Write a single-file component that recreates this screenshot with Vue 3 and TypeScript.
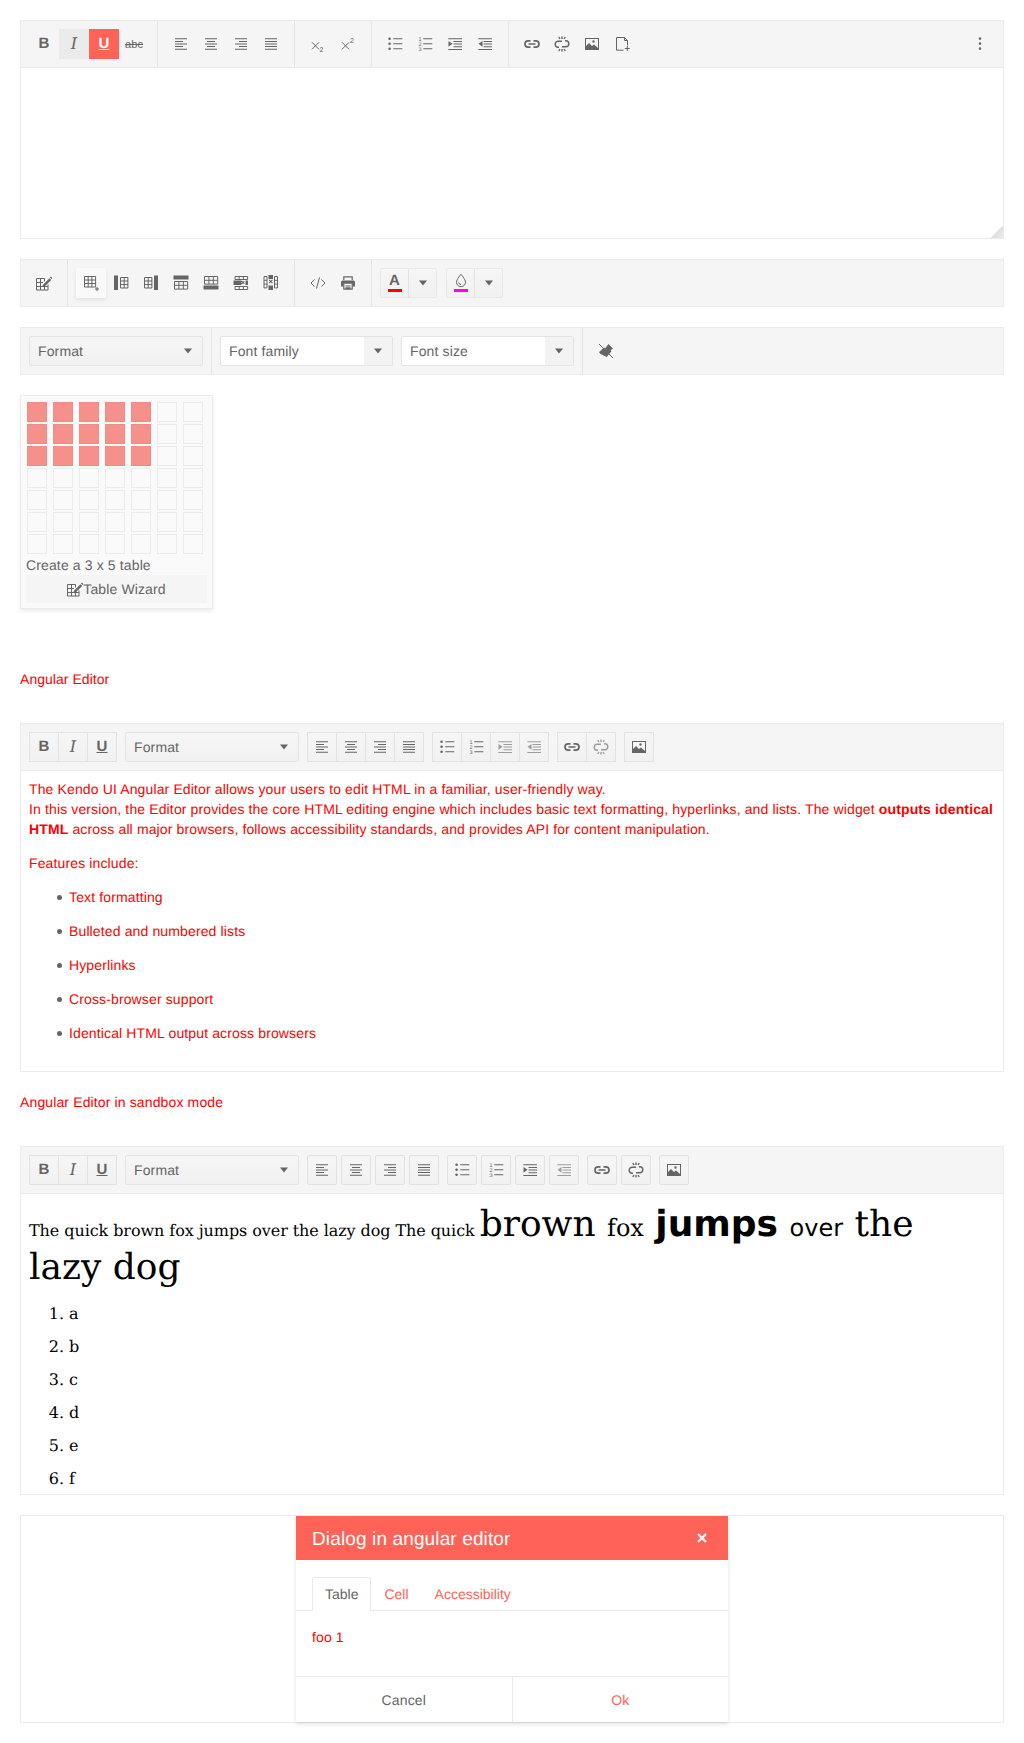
<script setup lang="ts">
import { h } from 'vue'

type Shape = { fill?: string; stroke?: string; width?: number; labels?: [number, number, string, number][] }
type Tool = { icon: string; state?: string }

// 1px bars are written as [x, y, w, h]
const bars = (spec: number[][]) =>
  spec.map(([x, y, w, ht = 1]) => `M${x} ${y}h${w}v${ht}h${-w}z`).join('')
const rows = [2.3, 4.9, 7.5, 10.1, 12.7]
const dot = (x: number, y: number, r = 1.3) =>
  `M${x - r} ${y}a${r} ${r} 0 1 0 ${2 * r} 0a${r} ${r} 0 1 0 ${-2 * r} 0z`
const grid = (x: number, y: number, cols: number, lines: number, w: number, ht: number) => {
  let d = ''
  for (let i = 0; i <= cols; i++) d += `M${x + i * w} ${y}v${lines * ht}`
  for (let i = 0; i <= lines; i++) d += `M${x} ${y + i * ht}h${cols * w}`
  return d
}

const icons: Record<string, Shape> = {
  alignLeft: { fill: bars(rows.map((y, i) => [2, y, i % 2 ? 8 : 12])) },
  alignCenter: { fill: bars(rows.map((y, i) => (i % 2 ? [4, y, 8] : [2, y, 12]))) },
  alignRight: { fill: bars(rows.map((y, i) => (i % 2 ? [6, y, 8] : [2, y, 12]))) },
  alignJustify: { fill: bars(rows.map((y) => [2, y, 12])) },
  sub: { stroke: 'M2 6.3l7 7M9 6.3l-7 7', labels: [[9.4, 15.5, '2', 7]] },
  sup: { stroke: 'M2 6.3l7 7M9 6.3l-7 7', labels: [[10, 6.7, '2', 7]] },
  bullets: {
    fill: dot(2.6, 2.8) + dot(2.6, 7.8) + dot(2.6, 12.8) + bars([[6.3, 2.3, 9], [6.3, 7.3, 9], [6.3, 12.3, 9]])
  },
  numbers: {
    fill: bars([[6.3, 2.3, 9], [6.3, 7.3, 9], [6.3, 12.3, 9]]),
    labels: [[1.6, 4.8, '1', 5.5], [1.6, 10, '2', 5.5], [1.6, 15, '3', 5.5]]
  },
  indent: {
    fill:
      bars([[1.3, 2.3, 13.7], [1.3, 13, 13.7], [6.5, 5, 8.5], [6.5, 7.6, 8.5], [6.5, 10.3, 8.5]]) +
      'M1.5 4.9l4 2.9-4 2.9z'
  },
  outdent: {
    fill:
      bars([[1.3, 2.3, 13.7], [1.3, 13, 13.7], [6.5, 5, 8.5], [6.5, 7.6, 8.5], [6.5, 10.3, 8.5]]) +
      'M5.5 4.9l-4 2.9 4 2.9z'
  },
  link: { stroke: 'M6.5 4.8H4.2a3.2 3.2 0 0 0 0 6.4h2.3M9.5 4.8h2.3a3.2 3.2 0 0 1 0 6.4H9.5M4.5 8h7', width: 1.7 },
  unlink: {
    stroke: 'M8 5.2H4.2a3 3 0 0 0 0 6h.8M8 10.8h3.8a3 3 0 0 0 0-6H11M8 .5v2.4M4.8 1l1.1 2M11.2 1l-1.1 2M8 13v2.4M4.8 15l1.1-2M11.2 15l-1.1-2',
    width: 1.4
  },
  image: {
    fill: 'M1 2h14v12H1zM2 3v7l3-3 3 3 2-1.5 4 3.5V3z' + dot(9.5, 5.5, 1.2)
  },
  insertFile: { stroke: 'M2.5 1.5h8v3h3v5M10.5 1.5l3 3M2.5 1.5v12.7h7M10.8 12.5h5M13.3 10v5' },
  more: { fill: dot(8, 2.6) + dot(8, 7.6) + dot(8, 12.6) },
  wizard: {
    stroke: 'M.5 3.5h8M.5 7.5h6.5M.5 11.5h11.5M.5 15h11.5M.5 3.5V15M4.5 3.5V15M8.5 3.5v3M8.5 11.5V15M12 9.5V15',
    fill: 'M7 9.8l6.5-6.6 1.7 1.7-6.6 6.6-2.4.6zM14 2.6l1-1 1.4 1.4-1 1z'
  },
  tableAdd: { stroke: grid(1.5, 1.5, 3, 3, 3.7, 3.5) + 'M12 14h4M14 12v4' },
  colLeft: { stroke: grid(7.5, 2.5, 2, 3, 3.7, 3.5), fill: bars([[1, 0.5, 4, 14.5]]) },
  colRight: { stroke: grid(1.5, 2.5, 2, 3, 3.7, 3.5), fill: bars([[11, 0.5, 4, 14.5]]) },
  rowAbove: { stroke: grid(1.5, 6.5, 3, 2, 4.4, 3.8), fill: bars([[.5, 0.5, 15, 4]]) },
  rowBelow: { stroke: grid(1.5, 1.5, 3, 2, 4.4, 3.8), fill: bars([[.5, 10.5, 15, 4]]) },
  rowDelete: {
    stroke: grid(2, 1.5, 3, 1, 4.2, 3) + grid(2, 11.5, 3, 1, 4.2, 3),
    fill: bars([[.5, 5.5, 8, 4.5], [12.5, 5.5, 2.5, 4.5]]) + 'M11 5.8l.7.7-1 1 1 1-.7.7-1-1-1 1-.7-.7 1-1-1-1 .7-.7 1 1z'
  },
  colDelete: {
    stroke: grid(1, 1.5, 1, 3, 3, 3.8) + grid(11.5, 1.5, 1, 3, 3, 3.8),
    fill: bars([[5.5, 0, 4.5, 4], [5.5, 10.5, 4.5, 4.5]]) + 'M5.8 5.3l.7-.7 1.3 1.2 1.3-1.2.7.7-1.2 1.2 1.2 1.2-.7.7-1.3-1.2-1.3 1.2-.7-.7 1.2-1.2z'
  },
  source: { stroke: 'M4.5 4.5L1 8l3.5 3.5M11.5 4.5L15 8l-3.5 3.5M9.5 2.5l-3 11' },
  print: {
    fill: 'M2.5 5.5h11a1.5 1.5 0 0 1 1.5 1.5v4.5h-2.5V8.8h-9v2.7H1V7a1.5 1.5 0 0 1 1.5-1.5z',
    stroke: 'M3.8 5V1.8h8.4V5M3.8 9v5.2h8.4V9M5.5 11h5M5.5 12.8h5',
    width: 1.2
  },
  clean: {
    fill: 'M10.5 1l4.5 4.5-2.5 1.8 1 1-4.7 5.7L2.5 11 1 9.2l5-4.7 1 1z',
    stroke: 'M1 1l14 14'
  },
  drop: {
    stroke: 'M8 1.3S3.5 6.3 3.5 9.2a4.5 4.5 0 0 0 9 0C12.5 6.3 8 1.3 8 1.3zM5.8 9.5a2.2 2.2 0 0 0 2.2 2.1'
  },
  arrow: { fill: 'M4 5.5h8L8 10.5z' },
  close: { stroke: 'M4 4l8 8M12 4l-8 8', width: 2.2 }
}

const glyphs: Record<string, string> = {
  bold: 'B',
  italic: 'I',
  underline: 'U',
  strike: 'abc'
}

// functional component so every toolbar can share the drawing code
const Ic = (props: { name: string }) => {
  const name = props.name
  if (glyphs[name]) return h('span', { class: `glyph glyph--${name}` }, glyphs[name])
  const s = icons[name]
  const kids = []
  if (s.fill) kids.push(h('path', { d: s.fill, fill: 'currentColor', 'fill-rule': 'evenodd' }))
  if (s.stroke)
    kids.push(h('path', { d: s.stroke, fill: 'none', stroke: 'currentColor', 'stroke-width': s.width ?? 1 }))
  for (const [x, y, label, size] of s.labels ?? [])
    kids.push(h('text', { x, y, fill: 'currentColor', 'font-size': size, 'font-family': 'Liberation Sans' }, label))
  return h('svg', { class: 'ic', width: 16, height: 16, viewBox: '0 0 16 16' }, kids)
}
Ic.props = ['name']

const t = (...names: string[]): Tool[] => names.map((icon) => ({ icon }))
const align = ['alignLeft', 'alignCenter', 'alignRight', 'alignJustify']

const fullToolbar: Tool[][] = [
  [{ icon: 'bold' }, { icon: 'italic', state: 'hover' }, { icon: 'underline', state: 'on' }, { icon: 'strike' }],
  t(...align),
  t('sub', 'sup'),
  t('bullets', 'numbers', 'indent', 'outdent'),
  t('link', 'unlink', 'image', 'insertFile')
]
const tableToolbar: Tool[][] = [
  t('wizard'),
  [
    { icon: 'tableAdd', state: 'focus' },
    ...t('colLeft', 'colRight', 'rowAbove', 'rowBelow', 'rowDelete', 'colDelete')
  ],
  t('source', 'print')
]

const angularGroups: Tool[][] = [
  t(...align),
  [...t('bullets', 'numbers'), { icon: 'indent', state: 'off' }, { icon: 'outdent', state: 'off' }],
  [{ icon: 'link' }, { icon: 'unlink', state: 'off' }],
  t('image')
]
const sandboxGroups: Tool[][] = [
  t(...align),
  [...t('bullets', 'numbers', 'indent'), { icon: 'outdent', state: 'off' }],
  t('link', 'unlink'),
  t('image')
]

const features = [
  'Text formatting',
  'Bulleted and numbered lists',
  'Hyperlinks',
  'Cross-browser support',
  'Identical HTML output across browsers'
]
const letters = ['a', 'b', 'c', 'd', 'e', 'f']
const cells = Array.from({ length: 49 }, (_, i) => i % 7 < 5 && i < 21)
const tabs = ['Table', 'Cell', 'Accessibility']
</script>

<template>
  <div class="page">
    <section class="editor editor--first">
      <div class="toolbar">
        <div
          v-for="(group, g) in fullToolbar"
          :key="g"
          class="tool-group"
          :class="{ 'tool-group--plain': g === fullToolbar.length - 1 }"
        >
          <button v-for="tool in group" :key="tool.icon" class="tool" :class="tool.state">
            <Ic :name="tool.icon" />
          </button>
        </div>
        <button class="tool tool--more"><Ic name="more" /></button>
      </div>
      <div class="resize-handle"></div>
    </section>

    <div class="toolbar toolbar--solo">
      <div v-for="(group, g) in tableToolbar" :key="g" class="tool-group">
        <button v-for="tool in group" :key="tool.icon" class="tool" :class="tool.state">
          <Ic :name="tool.icon" />
        </button>
      </div>
      <div class="tool-group tool-group--plain tool-group--splits">
        <div class="split">
          <button class="split__main">
            <span class="swatch-icon"><b class="swatch-a">A</b><i class="bar bar--red"></i></span>
          </button>
          <button class="split__arrow"><Ic name="arrow" /></button>
        </div>
        <div class="split">
          <button class="split__main">
            <span class="swatch-icon"><Ic name="drop" /><i class="bar bar--pink"></i></span>
          </button>
          <button class="split__arrow"><Ic name="arrow" /></button>
        </div>
      </div>
    </div>

    <div class="toolbar toolbar--solo">
      <div class="tool-group">
        <div class="dropdown">Format <Ic name="arrow" /></div>
      </div>
      <div class="tool-group">
        <div class="combo"><span class="combo__text">Font family</span><span class="combo__arrow"><Ic name="arrow" /></span></div>
        <div class="combo"><span class="combo__text">Font size</span><span class="combo__arrow"><Ic name="arrow" /></span></div>
      </div>
      <div class="tool-group tool-group--plain">
        <button class="tool"><Ic name="clean" /></button>
      </div>
    </div>

    <div class="table-popup">
      <div class="table-popup__grid">
        <span v-for="(on, i) in cells" :key="i" class="cell" :class="{ 'cell--on': on }"></span>
      </div>
      <div class="table-popup__caption">Create a 3 x 5 table</div>
      <button class="table-popup__wizard"><Ic name="wizard" />Table Wizard</button>
    </div>

    <p class="section-title">Angular Editor</p>
    <section class="editor editor--tall">
      <div class="toolbar toolbar--boxed">
        <div class="btn-group">
          <button v-for="name in ['bold', 'italic', 'underline']" :key="name" class="box-btn"><Ic :name="name" /></button>
        </div>
        <div class="dropdown">Format <Ic name="arrow" /></div>
        <div v-for="(group, g) in angularGroups" :key="g" class="btn-group">
          <button v-for="tool in group" :key="tool.icon" class="box-btn" :class="tool.state"><Ic :name="tool.icon" /></button>
        </div>
      </div>
      <div class="content">
        <p>
          The Kendo UI Angular Editor allows your users to edit HTML in a familiar, user-friendly way.<br />
          In this version, the Editor provides the core HTML editing engine which includes basic text formatting,
          hyperlinks, and lists. The widget <strong>outputs identical HTML</strong> across all major browsers, follows
          accessibility standards, and provides API for content manipulation.
        </p>
        <p>Features include:</p>
        <ul>
          <li v-for="item in features" :key="item"><p>{{ item }}</p></li>
        </ul>
      </div>
    </section>

    <p class="section-title section-title--second">Angular Editor in sandbox mode</p>
    <section class="editor editor--tall">
      <div class="toolbar toolbar--boxed">
        <div class="btn-group">
          <button v-for="name in ['bold', 'italic', 'underline']" :key="name" class="box-btn"><Ic :name="name" /></button>
        </div>
        <div class="dropdown">Format <Ic name="arrow" /></div>
        <div v-for="(group, g) in sandboxGroups" :key="g" class="btn-row">
          <button v-for="tool in group" :key="tool.icon" class="box-btn" :class="tool.state"><Ic :name="tool.icon" /></button>
        </div>
      </div>
      <div class="sandbox">
        <div>
          The quick brown fox jumps over the lazy dog The quick
          <span class="big">brown <span class="mid">fox</span> <strong class="sans">jumps</strong> <span class="mid sans">over</span> the<br />lazy dog</span>
        </div>
        <ol>
          <li v-for="letter in letters" :key="letter">{{ letter }}</li>
        </ol>
      </div>
    </section>

    <section class="dialog-host">
      <div class="dialog">
        <header class="dialog__title">
          <span class="dialog__heading">Dialog in angular editor</span>
          <Ic name="close" />
        </header>
        <div class="tabs">
          <span v-for="(tab, i) in tabs" :key="tab" class="tab" :class="{ 'tab--active': i === 0 }">{{ tab }}</span>
        </div>
        <div class="dialog__body"><p>foo 1</p></div>
        <footer class="dialog__actions">
          <button>Cancel</button>
          <button class="primary">Ok</button>
        </footer>
      </div>
    </section>
  </div>
</template>

<style scoped>
.page {
  padding: 20px;
  font: 14px/20px "Liberation Sans", Arial, sans-serif;
  letter-spacing: 0.13px;
  text-rendering: geometricPrecision;
  color: #656565;
}
p {
  color: #f00;
  margin: 14px 0;
}
button {
  font: inherit;
  color: inherit;
  letter-spacing: inherit;
  padding: 0;
  border: 0;
  background: none;
  text-rendering: inherit;
}
.ic {
  display: block;
  flex: none;
}

.editor {
  position: relative;
  display: flex;
  flex-direction: column;
  border: 1px solid #ebebeb;
  margin-bottom: 20px;
  overflow: hidden;
  box-sizing: border-box;
}
.editor--first {
  height: 219px;
}
.editor--tall {
  height: 349px;
}
.resize-handle {
  position: absolute;
  right: 0;
  bottom: 0;
  width: 12px;
  height: 13px;
  background: linear-gradient(135deg, transparent 50%, #dedede 50%, #ececec);
}

.toolbar {
  display: flex;
  flex: none;
  height: 46px;
  background: #f5f5f5;
  border-bottom: 1px solid #ebebeb;
}
.toolbar--solo {
  border: 1px solid #ebebeb;
  margin-bottom: 20px;
}
.toolbar--boxed {
  padding: 8px;
  gap: 8px;
  height: 30px;
  box-sizing: content-box;
}
.tool-group {
  display: flex;
  padding: 8px;
  border-right: 1px solid #e4e4e4;
}
.tool-group:has(.combo) {
  gap: 8px;
}
.tool-group--plain {
  border-right: 0;
}
.tool-group--splits {
  gap: 9px;
}
.tool {
  display: flex;
  align-items: center;
  justify-content: center;
  width: 30px;
  height: 30px;
  flex: none;
}
.tool--more {
  margin: 8px 8px 0 auto;
}
.tool.hover {
  background: #ebebeb;
}
.tool.on {
  background: #ff6358;
  color: #fff;
}
.tool.focus {
  background: #f9f9f9;
  box-shadow: 0 2px 4px rgba(0, 0, 0, 0.08);
}

.glyph {
  display: block;
  line-height: 16px;
}
.glyph--bold,
.glyph--underline {
  font: 700 15px/16px "Liberation Sans", sans-serif;
}
.glyph--underline {
  text-decoration: underline;
}
.glyph--italic {
  font: italic 400 16px/16px "DejaVu Serif", serif;
}
.glyph--strike {
  font: 11px/16px "Liberation Sans", sans-serif;
  text-decoration: line-through;
  margin-top: 2px;
}

.split {
  display: flex;
  height: 30px;
  border: 1px solid #e8e8e8;
  border-radius: 2px;
  box-sizing: border-box;
  background: linear-gradient(#f6f6f6, #f1f1f1);
}
.split__main {
  width: 28px;
  display: flex;
  justify-content: center;
  border-right: 1px solid #e2e2e2;
}
.split__arrow {
  width: 27px;
  display: flex;
  align-items: center;
  justify-content: center;
}
.swatch-icon {
  display: flex;
  flex-direction: column;
  align-items: center;
  width: 14px;
  height: 28px;
  padding-top: 4px;
  box-sizing: border-box;
}
.swatch-a {
  display: block;
  font: 700 15px/15px "Liberation Sans", sans-serif;
  height: 16px;
}
.bar {
  display: block;
  width: 14px;
  height: 3px;
  flex: none;
}
.bar--red {
  background: #f00;
}
.bar--pink {
  background: #f0f;
}

.dropdown {
  display: flex;
  align-items: center;
  justify-content: space-between;
  width: 174px;
  height: 30px;
  padding: 0 6px 0 8px;
  border: 1px solid #e4e4e4;
  border-radius: 2px;
  background: linear-gradient(#f6f6f6, #f1f1f1);
  box-sizing: border-box;
}
.combo {
  display: flex;
  width: 173px;
  height: 30px;
  border: 1px solid #e4e4e4;
  border-radius: 2px;
  box-sizing: border-box;
  background: #fff;
}
.combo__text {
  flex: 1;
  padding-left: 8px;
  line-height: 28px;
}
.combo__arrow {
  display: flex;
  align-items: center;
  justify-content: center;
  width: 28px;
  background: #f3f3f3;
}

.table-popup {
  width: 193px;
  height: 214px;
  box-sizing: border-box;
  padding: 6px 5px 5px;
  border: 1px solid #ebebeb;
  background: #fafafa;
  box-shadow: 0 2px 4px rgba(0, 0, 0, 0.08);
}
.table-popup__grid {
  display: grid;
  grid-template-columns: repeat(7, 20px);
  gap: 2px 6px;
  margin-left: 1px;
  margin-bottom: 1px;
}
.cell {
  height: 20px;
  box-sizing: border-box;
  border: 1px solid #ebebeb;
}
.cell--on {
  background: #f5908a;
  border-color: #ee8d87;
}
.table-popup__wizard {
  display: flex;
  align-items: center;
  justify-content: center;
  width: 100%;
  height: 28px;
  background: #f5f5f5;
}

.section-title {
  margin: 60px 0 34px;
  letter-spacing: 0.04px;
}
.section-title--second {
  margin-top: 0;
  letter-spacing: 0.13px;
}

.toolbar--boxed .dropdown {
  flex: none;
}
.btn-group {
  display: flex;
}
.btn-row {
  display: flex;
  gap: 4px;
}
.box-btn {
  display: flex;
  align-items: center;
  justify-content: center;
  width: 30px;
  height: 30px;
  box-sizing: border-box;
  border: 1px solid #e2e2e2;
  background: linear-gradient(#f6f6f6, #f1f1f1);
  border-radius: 2px;
}
.btn-group .box-btn {
  border-radius: 0;
}
.btn-group .box-btn + .box-btn {
  margin-left: -1px;
}
.box-btn.off .ic {
  opacity: 0.6;
}

.content {
  padding: 8px;
}
.content > p:first-child {
  margin-top: 0;
}
.content ul {
  margin: 14px 0;
  padding-left: 40px;
  list-style: none;
}
.content li {
  position: relative;
}
.content li::before {
  content: "";
  position: absolute;
  left: -12px;
  top: 8px;
  width: 5px;
  height: 5px;
  border-radius: 50%;
  background: #656565;
}

.sandbox {
  padding: 9px 8px 8px;
  color: #000;
  font: 16px/1.2 "DejaVu Serif", serif;
  letter-spacing: -0.075px;
}
.big {
  font-size: 36px;
  letter-spacing: 0;
}
.mid {
  font-size: 24px;
}
.sans {
  font-family: "DejaVu Sans", sans-serif;
}
.sandbox ol {
  margin: 15px 0 16px;
  padding-left: 40px;
}
.sandbox li {
  margin-bottom: 13.8px;
}

.dialog-host {
  display: flex;
  justify-content: center;
  height: 208px;
  box-sizing: border-box;
  border: 1px solid #ebebeb;
}
.dialog {
  display: flex;
  flex-direction: column;
  width: 432px;
  height: 206px;
  background: #fff;
  box-shadow: 0 2px 4px rgba(0, 0, 0, 0.12);
}
.dialog__title {
  display: flex;
  align-items: center;
  justify-content: space-between;
  height: 44px;
  flex: none;
  padding: 0 18px 0 16px;
  background: #ff6358;
  color: #fff;
  font-size: 19px;
}
.dialog__heading {
  padding-top: 3px;
}
.tabs {
  display: flex;
  flex: none;
  height: 33px;
  margin-top: 17px;
  padding-left: 16px;
  border-bottom: 1px solid #e8e8e8;
  letter-spacing: 0;
}
.tab {
  padding: 6px 12px 0;
  height: 33px;
  box-sizing: border-box;
  color: #ff6358;
  border: 1px solid transparent;
  border-bottom: 0;
}
.tab--active {
  color: #656565;
  background: #fff;
  height: 34px;
  border-color: #e8e8e8;
  border-radius: 2px 2px 0 0;
}
.dialog__body {
  flex: 1;
  padding: 16px;
}
.dialog__body p {
  margin: 0;
}
.dialog__actions {
  display: flex;
  flex: none;
  height: 45px;
  border-top: 1px solid #e8e8e8;
}
.dialog__actions button {
  flex: 1;
}
.dialog__actions button + button {
  border-left: 1px solid #e8e8e8;
}
.primary {
  color: #ff6358;
}
</style>
